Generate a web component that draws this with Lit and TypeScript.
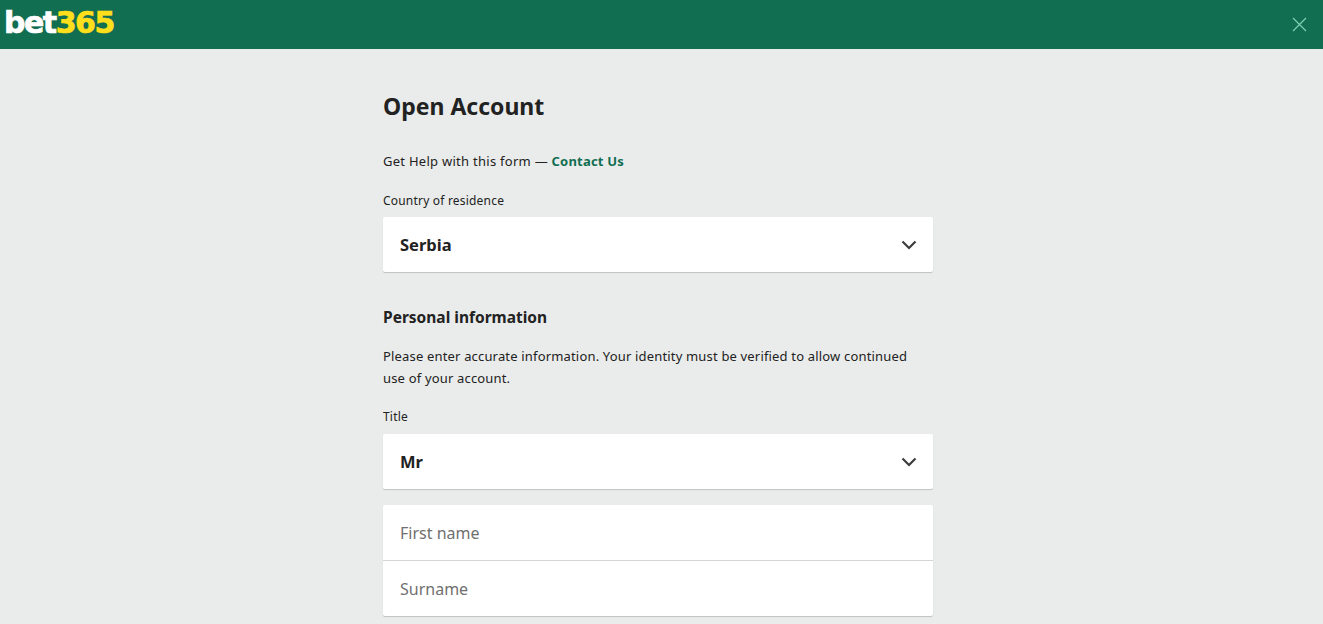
import { LitElement, html, css } from "lit";
import { customElement } from "lit/decorators.js";

@customElement("app-root")
export class AppRoot extends LitElement {
  static styles = css`
    :host {
      display: block;
      height: 624px;
      overflow: hidden;
      background: #eaeceb;
      font-family: "Noto Sans", "Open Sans", sans-serif;
      color: #222;
    }
    .bar {
      height: 49px;
      background: #126e51;
      display: flex;
      align-items: center;
      justify-content: space-between;
      padding: 0 16px 4px 4px;
      box-sizing: border-box;
    }
    .logo {
      font-family: "DejaVu Sans", sans-serif;
      font-weight: 700;
      font-size: 30px;
      letter-spacing: -1.5px;
      -webkit-text-stroke: 0.7px currentColor;
      color: #fff;
      line-height: 1;
    }
    .logo span { color: #ffdf1b; }
    .close { width: 15px; height: 15px; display: block; margin-top: 4px; }
    .col {
      width: 550px;
      margin-left: 383px;
      display: flex;
      flex-direction: column;
    }
    h1 {
      margin: 40px 0 0;
      font-size: 23px;
      line-height: 34px;
      font-weight: 700;
    }
    .help {
      margin: 28px 0 0;
      font-size: 13px;
      line-height: 20px;
      letter-spacing: 0.27px;
    }
    .help b { color: #126e51; font-weight: 700; letter-spacing: 0.2px; }
    .label {
      font-size: 12px;
      line-height: 18px;
      letter-spacing: 0.2px;
      margin-top: 21px;
      margin-bottom: 7px;
    }
    .title-label { margin-top: 19px; margin-bottom: 8px; }
    .field {
      background: #fff;
      border-radius: 2px;
      box-shadow: 0 1px 1px rgba(0, 0, 0, 0.18);
      height: 55px;
      padding: 0 17px;
      display: flex;
      align-items: center;
      justify-content: space-between;
      box-sizing: border-box;
      font-size: 16.5px;
      font-weight: 700;
    }
    .field svg { width: 16px; height: 10px; margin-right: -1px; }
    h2 {
      margin: 34px 0 0;
      font-size: 15.5px;
      line-height: 22px;
      font-weight: 700;
    }
    .desc {
      margin: 17px 0 0;
      font-size: 13px;
      line-height: 22px;
      letter-spacing: 0.17px;
      width: 530px;
    }
    .group {
      margin-top: 16px;
      background: #fff;
      border-radius: 2px;
      box-shadow: 0 1px 1px rgba(0, 0, 0, 0.18);
      display: flex;
      flex-direction: column;
    }
    .row {
      height: 55px;
      padding: 0 17px;
      display: flex;
      align-items: center;
      box-sizing: border-box;
      font-size: 16px;
      color: #707070;
    }
    .row + .row { height: 56px; border-top: 1px solid #d4d4d4; }
  `;

  chevron() {
    return html`<svg viewBox="0 0 16 10" fill="none" stroke="#3c3c3c" stroke-width="2.2"><path d="M1.5 1.5 8 8l6.5-6.5" /></svg>`;
  }

  render() {
    return html`
      <div class="bar">
        <div class="logo">bet<span>365</span></div>
        <svg class="close" viewBox="0 0 15 15" fill="none" stroke="#7fd0b2" stroke-width="1.2"><path d="M1 1l13 13M14 1 1 14" /></svg>
      </div>
      <div class="col">
        <h1>Open Account</h1>
        <p class="help">Get Help with this form — <b>Contact Us</b></p>
        <div class="label">Country of residence</div>
        <div class="field"><span>Serbia</span>${this.chevron()}</div>
        <h2>Personal information</h2>
        <p class="desc">Please enter accurate information. Your identity must be verified to allow continued use of your account.</p>
        <div class="label title-label">Title</div>
        <div class="field"><span>Mr</span>${this.chevron()}</div>
        <div class="group">
          <div class="row">First name</div>
          <div class="row">Surname</div>
        </div>
      </div>
    `;
  }
}
